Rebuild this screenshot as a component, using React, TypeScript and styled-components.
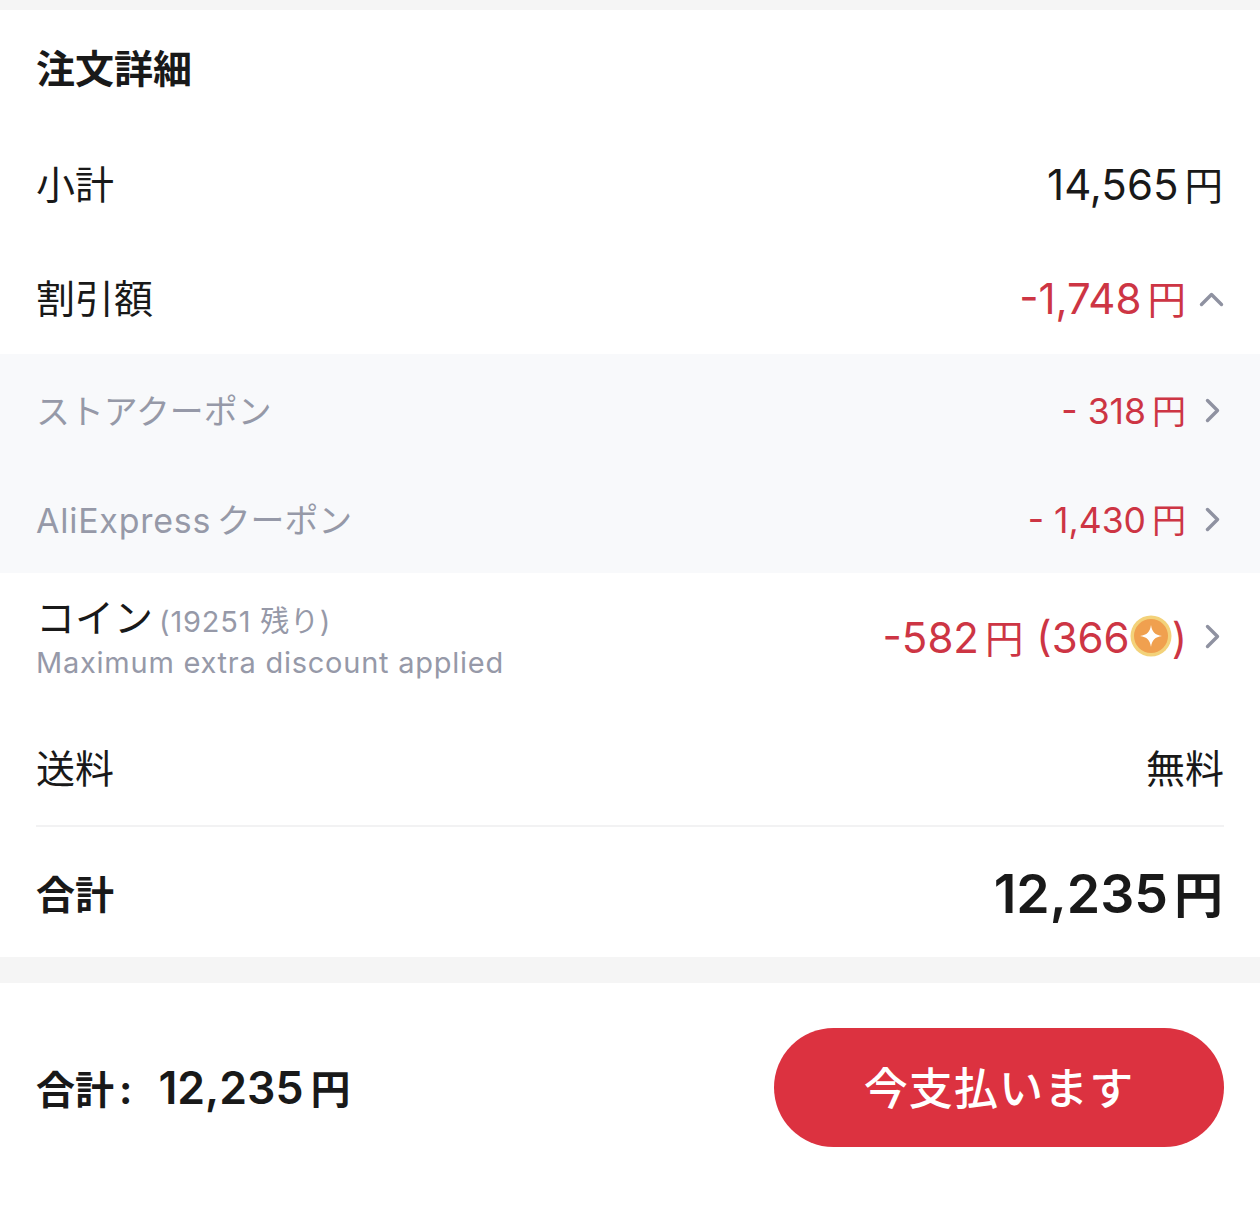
import React from "react";
import styled, { createGlobalStyle } from "styled-components";

const Global = createGlobalStyle`
  html, body { margin: 0; padding: 0; background: #f5f5f5; }
  body { font-family: Inter, "Noto Sans CJK JP", sans-serif; color: #191919; -webkit-font-smoothing: antialiased; }
`;

const Page = styled.div`
  width: 1260px;
  height: 1216px;
  padding-top: 10px;
  box-sizing: border-box;
  display: flex;
  flex-direction: column;
  gap: 26px;
`;

const Panel = styled.section`
  height: 947px;
  background: #fff;
  display: flex;
  flex-direction: column;
`;

const Title = styled.h2`
  margin: 0;
  height: 120px;
  padding: 0 36px 8px;
  box-sizing: border-box;
  display: flex;
  align-items: center;
  font-size: 39px;
  font-weight: 700;
`;

const Row = styled.div<{ $h: number; $top?: number }>`
  height: ${(p) => p.$h}px;
  padding: ${(p) => p.$top ?? 0}px 36px 0;
  box-sizing: border-box;
  flex: none;
  display: flex;
  align-items: center;
  justify-content: space-between;
`;

const Label = styled.span<{ $muted?: boolean; $bold?: boolean; $lift?: number }>`
  font-size: ${(p) => (p.$muted ? 33.9 : 39)}px;
  font-weight: ${(p) => (p.$bold ? 700 : 400)};
  color: ${(p) => (p.$muted ? "#9699a8" : "#191919")};
  padding-bottom: ${(p) => p.$lift ?? 6}px;
`;

const Latin = styled.span`
  letter-spacing: 0.8px;
  margin-right: -4px;
`;

const Value = styled.span<{ $size?: number; $red?: boolean; $bold?: boolean; $lift?: number }>`
  display: inline-flex;
  align-items: baseline;
  font-size: ${(p) => p.$size ?? 42}px;
  font-weight: ${(p) => (p.$bold ? 600 : 400)};
  color: ${(p) => (p.$red ? "#cd3544" : "#191919")};
  white-space: pre;
  padding-bottom: ${(p) => p.$lift ?? 5}px;
`;

const Yen = styled.span<{ $size?: number; $gap?: number }>`
  font-size: ${(p) => p.$size ?? 38.5}px;
  margin-left: ${(p) => p.$gap ?? 6}px;
  margin-right: 1px;
`;

const Right = styled.div`
  display: flex;
  align-items: center;
`;

const Chevron = styled.svg<{ $wide?: boolean }>`
  width: ${(p) => (p.$wide ? 25 : 15)}px;
  height: ${(p) => (p.$wide ? 15 : 25)}px;
  margin-left: ${(p) => (p.$wide ? 12 : 18)}px;
  margin-right: ${(p) => (p.$wide ? 0 : 4)}px;
  fill: none;
  stroke: #8f92a1;
  stroke-width: 3.4;
  stroke-linecap: round;
  stroke-linejoin: round;
`;

const Band = styled.div`
  background: #f8f9fb;
  height: 219px;
  flex: none;
  display: flex;
  flex-direction: column;
`;

const CoinText = styled.div`
  display: flex;
  flex-direction: column;
  padding-top: 6px;
`;

const CoinHead = styled.div`
  display: flex;
  align-items: baseline;
  gap: 6px;
  height: 46px;
  line-height: 46px;
`;

const CoinLeft = styled.span`
  font-size: 29px;
  letter-spacing: 0.8px;
  color: #9699a8;
  padding-top: 1px;
`;

const CoinNote = styled.div`
  font-size: 29px;
  height: 40px;
  margin-top: 2px;
  line-height: 40px;
  letter-spacing: 0.75px;
  color: #9699a8;
`;

const Coin = styled.svg`
  width: 42px;
  height: 42px;
  flex: none;
  align-self: center;
`;

const Divider = styled.hr`
  flex: none;
  margin: 0 36px;
  border: 0;
  height: 2px;
  background: #f2f2f3;
`;

const Footer = styled.footer`
  flex: 1;
  background: #fff;
  display: flex;
  align-items: flex-start;
  justify-content: space-between;
  padding: 45px 36px 0;
`;

const FooterTotal = styled.div`
  height: 119px;
  display: flex;
  align-items: baseline;
  font-size: 39px;
  font-weight: 700;
  padding-top: 30px;
  box-sizing: border-box;
`;

const FooterColon = styled.span`
  margin: 0 26px 0 5px;
  font-size: 40px;
`;

const FooterAmount = styled.span`
  font-size: 44.6px;
  font-weight: 600;
`;

const PayButton = styled.button`
  width: 450px;
  height: 119px;
  border: 0;
  border-radius: 60px;
  background: #dc3240;
  color: #fff;
  font-family: inherit;
  font-size: 44px;
  font-weight: 500;
  letter-spacing: 1.1px;
  padding: 0 0 4px;
`;

const ChevronRight = () => (
  <Chevron viewBox="0 0 15 25"><path d="M2.5 2.5 L12.5 12.5 L2.5 22.5" /></Chevron>
);

export default function App() {
  return (
    <>
      <Global />
      <Page>
        <Panel>
          <Title>注文詳細</Title>
          <Row $h={110}>
            <Label>小計</Label>
            <Value>14,565<Yen>円</Yen></Value>
          </Row>
          <Row $h={114} $top={4}>
            <Label>割引額</Label>
            <Right>
              <Value $red>-1,748<Yen>円</Yen></Value>
              <Chevron $wide viewBox="0 0 25 15"><path d="M2.5 12.5 L12.5 2.5 L22.5 12.5" /></Chevron>
            </Right>
          </Row>
          <Band>
            <Row $h={112}>
              <Label $muted $lift={2}>ストアクーポン</Label>
              <Right>
                <Value $red $size={35.5} $lift={2}>- 318<Yen $size={34} $gap={6}>円</Yen></Value>
                <ChevronRight />
              </Right>
            </Row>
            <Row $h={107}>
              <Label $muted $lift={3}><Latin>AliExpress</Latin> クーポン</Label>
              <Right>
                <Value $red $size={35.5} $lift={3}>- 1,430<Yen $size={34} $gap={6}>円</Yen></Value>
                <ChevronRight />
              </Right>
            </Row>
          </Band>
          <Row $h={126}>
            <CoinText>
              <CoinHead>
                <Label $lift={0}>コイン</Label>
                <CoinLeft>(19251 残り)</CoinLeft>
              </CoinHead>
              <CoinNote>Maximum extra discount applied</CoinNote>
            </CoinText>
            <Right>
              <Value $red $lift={0}>
                -582<Yen>円</Yen> (366
                <Coin viewBox="0 0 42 42">
                  <circle cx="21" cy="21" r="20.5" fill="#f3d27a" />
                  <circle cx="21" cy="21" r="17" fill="#f0a04f" />
                  <path d="M21 10 C22 17 25 20 32 21 C25 22 22 25 21 32 C20 25 17 22 10 21 C17 20 20 17 21 10 Z" fill="#fff" />
                </Coin>
                )
              </Value>
              <ChevronRight />
            </Right>
          </Row>
          <Row $h={126} $top={14}>
            <Label>送料</Label>
            <Value $size={39} $lift={6}>無料</Value>
          </Row>
          <Divider />
          <Row $h={129}>
            <Label $bold $lift={0}>合計</Label>
            <Value $size={53.6} $bold $lift={0}>12,235<Yen $size={49} $gap={6}>円</Yen></Value>
          </Row>
        </Panel>
        <Footer>
          <FooterTotal>
            合計<FooterColon>:</FooterColon>
            <FooterAmount>12,235</FooterAmount>
            <Yen $size={40} $gap={7}>円</Yen>
          </FooterTotal>
          <PayButton>今支払います</PayButton>
        </Footer>
      </Page>
    </>
  );
}
